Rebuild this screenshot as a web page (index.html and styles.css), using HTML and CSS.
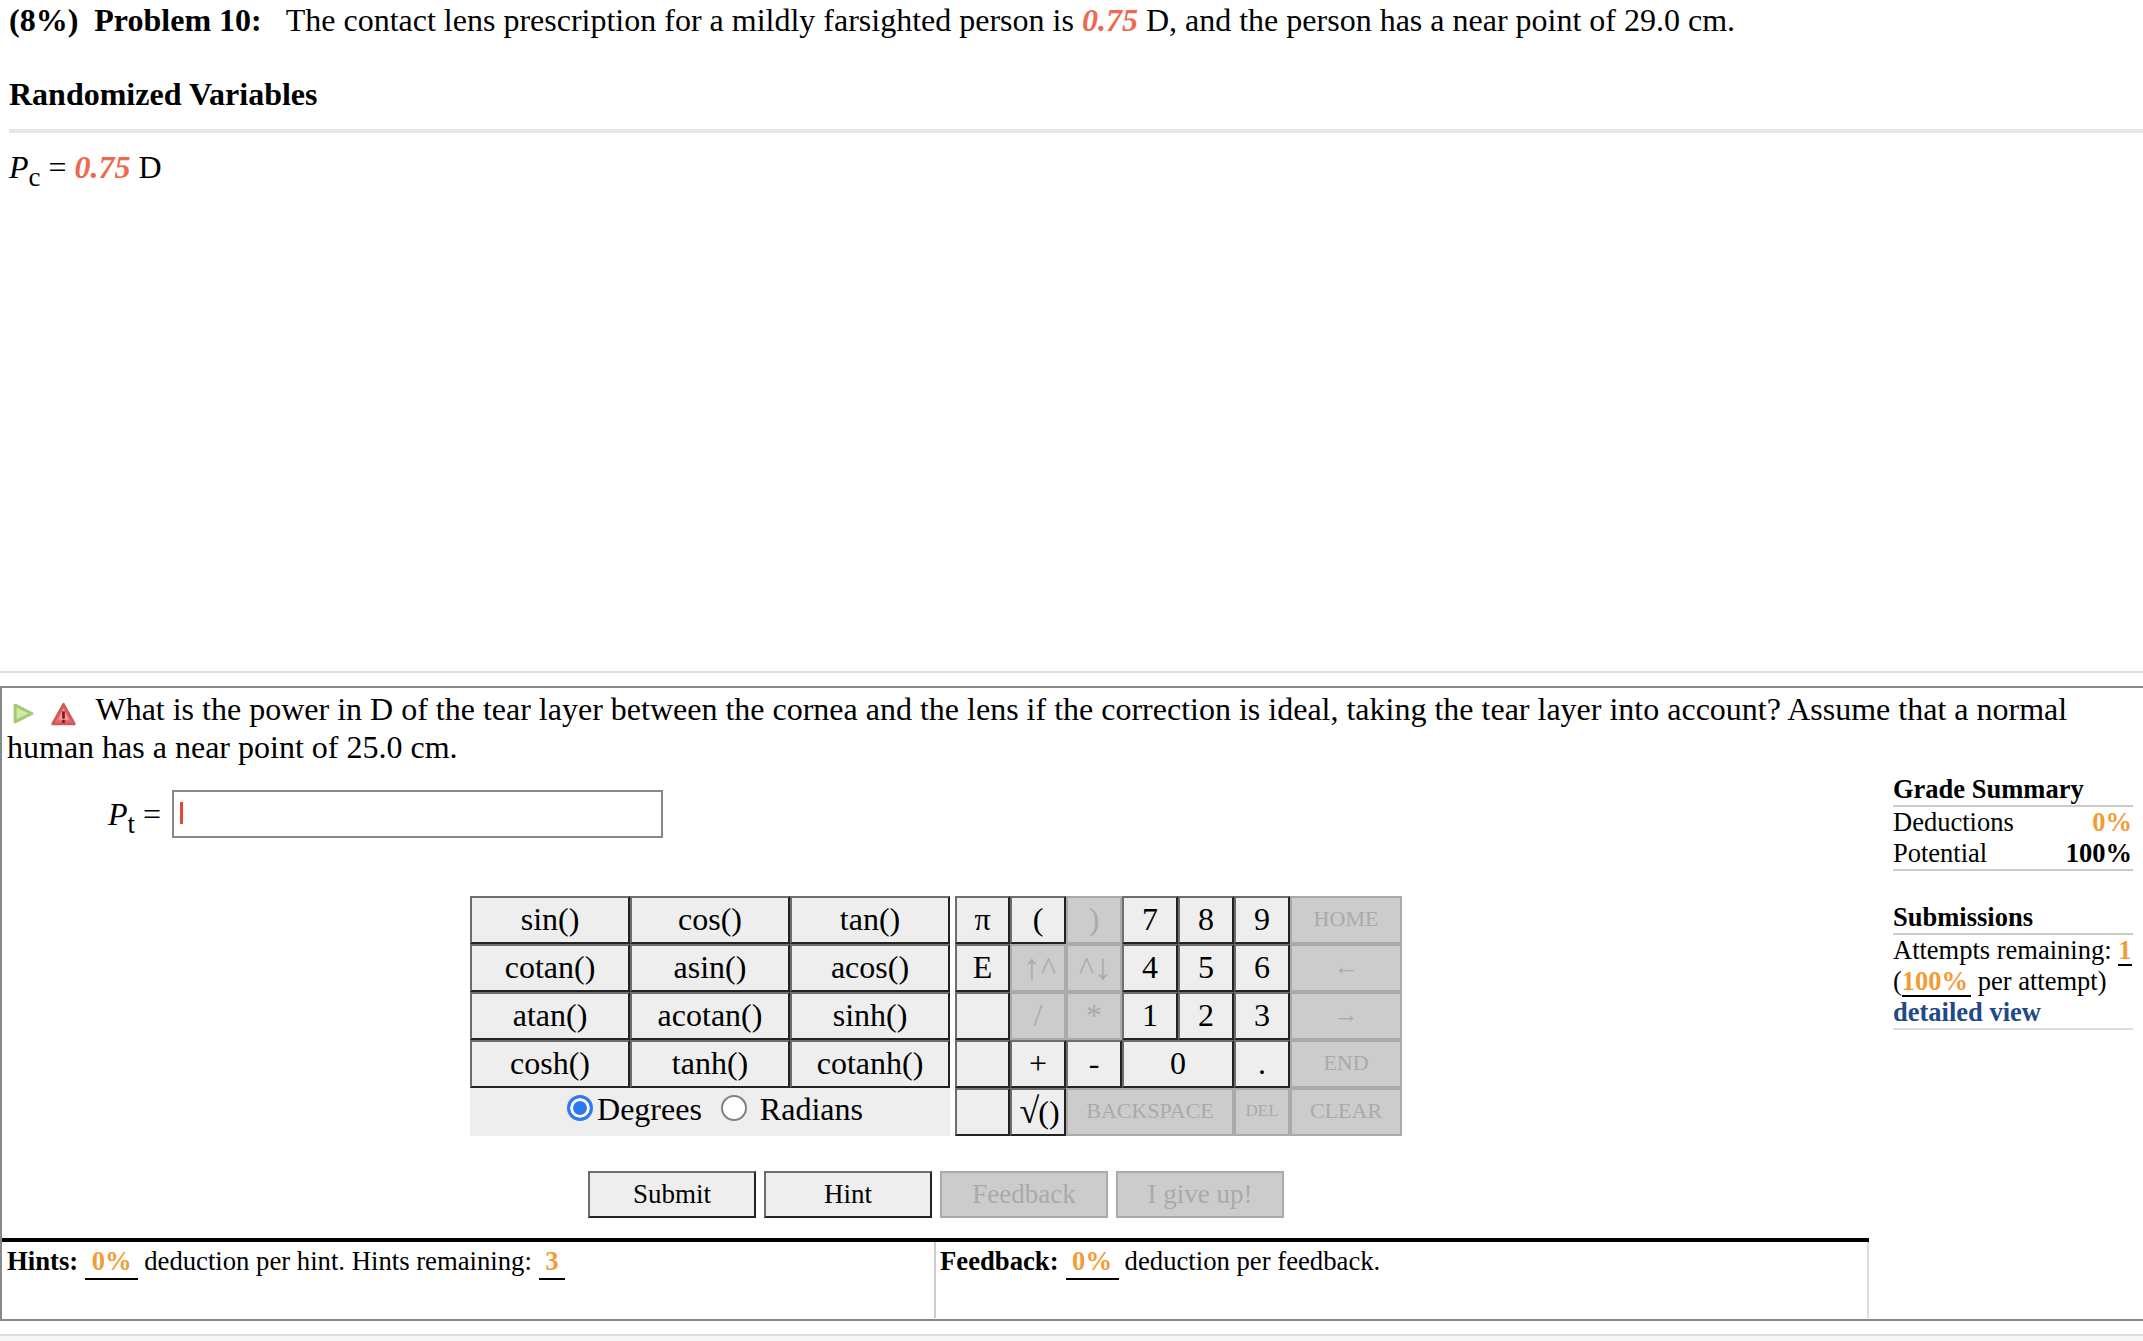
FILE: index.html
```html
<!DOCTYPE html>
<html lang="en">
<head>
<meta charset="utf-8">
<title>Problem 10</title>
<link rel="stylesheet" href="styles.css">
</head>
<body>
<header class="statement">
  <p class="intro"><b>(8%)</b><b class="prob">Problem 10:</b><span class="desc">The contact lens prescription for a mildly farsighted person is <i class="rand">0.75</i> D, and the person has a near point of 29.0 cm.</span></p>
  <h2 class="rv-title">Randomized Variables</h2>
  <div class="rv-rule"></div>
  <p class="rv"><i>P</i><sub>c</sub> = <i class="rand">0.75</i> D</p>
</header>
<div class="sep"></div>
<section class="question">
  <p class="q-text">
    <svg class="ico-play" viewBox="0 0 20 20" width="21" height="21"><path d="M2 2 L18 10 L2 18 Z" fill="#d3e8a4" stroke="#a5c873" stroke-width="2.8" stroke-linejoin="round"/></svg>
    <svg class="ico-warn" viewBox="0 0 24 24" width="25" height="25"><path d="M12 2 L22.5 21 H1.5 Z" fill="#e46c6c" stroke="#d05a5a" stroke-width="2.4" stroke-linejoin="round"/><path d="M12 6.5 L17 17 H7 Z" fill="#f0a4a4"/><path d="M12 9 V16" stroke="#8a1414" stroke-width="2.6"/><circle cx="12" cy="18.6" r="1.5" fill="#8a1414"/></svg>
    <span class="q-first">What is the power in D of the tear layer between the cornea and the lens if the correction is ideal, taking the tear layer into account? Assume that a normal human has a near point of 25.0 cm.</span>
  </p>
  <div class="work">
    <div class="main">
      <div class="answer">
        <span class="ans-label"><i>P</i><sub>t</sub> =</span>
        <div class="ans-input"><span class="caret"></span></div>
      </div>
      <div class="pad">
        <div class="funcs">
          <button class="k">sin()</button><button class="k">cos()</button><button class="k">tan()</button>
          <button class="k">cotan()</button><button class="k">asin()</button><button class="k">acos()</button>
          <button class="k">atan()</button><button class="k">acotan()</button><button class="k">sinh()</button>
          <button class="k">cosh()</button><button class="k">tanh()</button><button class="k">cotanh()</button>
          <div class="angle">
            <span class="radio on"></span><span class="deg">Degrees</span><span class="radio"></span><span class="rad">Radians</span>
          </div>
        </div>
        <div class="keys">
          <button class="k">π</button><button class="k">(</button><button class="k off">)</button><button class="k">7</button><button class="k">8</button><button class="k">9</button><button class="k off sm">HOME</button>
          <button class="k">E</button><button class="k off nudge"><span class="arrow">↑</span>^</button><button class="k off nudge">^<span class="arrow">↓</span></button><button class="k">4</button><button class="k">5</button><button class="k">6</button><button class="k off sm arw">←</button>
          <button class="k"></button><button class="k off">/</button><button class="k off">*</button><button class="k">1</button><button class="k">2</button><button class="k">3</button><button class="k off sm arw">→</button>
          <button class="k"></button><button class="k">+</button><button class="k">-</button><button class="k s2">0</button><button class="k">.</button><button class="k off sm">END</button>
          <button class="k"></button><button class="k nudge"><span class="root">√</span>()</button><button class="k off sm s3">BACKSPACE</button><button class="k off xs">DEL</button><button class="k off sm">CLEAR</button>
        </div>
      </div>
      <div class="actions">
        <button class="act">Submit</button><button class="act">Hint</button><button class="act off">Feedback</button><button class="act off">I give up!</button>
      </div>
      <div class="foot">
        <div class="foot-cell hints"><b>Hints:</b><span class="val w-pct">0%</span>deduction per hint. Hints remaining:<span class="val w-one">3</span></div>
        <div class="foot-cell fb"><b>Feedback:</b><span class="val w-pct">0%</span>deduction per feedback.</div>
      </div>
    </div>
    <aside class="side">
      <h3 class="side-h">Grade Summary</h3>
      <div class="side-row"><span>Deductions</span><b class="org">0%</b></div>
      <div class="side-row last"><span>Potential</span><b>100%</b></div>
      <h3 class="side-h second">Submissions</h3>
      <div class="side-text">Attempts remaining: <b class="org und">1</b><br>(<b class="org und wide">100%</b> per attempt)<br><a class="detail" href="#">detailed view</a></div>
    </aside>
  </div>
</section>
<div class="page-end"></div>
</body>
</html>
```
FILE: styles.css
```css
* { box-sizing: border-box; }
html, body { margin: 0; padding: 0; background: #fff; }
body { font-family: "Liberation Serif", "Times New Roman", serif; font-size: 32px; color: #000; width: 2143px; height: 1341px; overflow: hidden; display: flex; flex-direction: column; }
p, h2, h3 { margin: 0; }
.statement { height: 671px; padding: 2px 9px 0; flex: none; }
.intro { line-height: 36px; white-space: nowrap; }
.prob { margin-left: 16px; }
.desc { margin-left: 24px; }
.rand { color: #ee6a4e; font-weight: bold; }
.rv-title { font-size: 32px; line-height: 36px; font-weight: bold; margin-top: 38px; }
.rv-rule { height: 4px; background: #e6e6e6; margin: 17px -9px 0 0; }
.rv { line-height: 36px; margin-top: 16px; white-space: nowrap; }
sub { font-size: 27px; line-height: 0; vertical-align: -8px; }
.sep { height: 2px; background: #ddd; flex: none; }
.question { flex: none; margin-top: 13px; height: 635px; border: 2px solid #888; border-right: 0; position: relative; }
.q-text { line-height: 37.5px; padding: 3px 40px 0 5px; }
.ico-play { vertical-align: -4px; margin-left: 6px; filter: blur(0.5px); }
.ico-warn { vertical-align: -7px; margin-left: 9px; margin-right: 12px; filter: blur(0.4px); }
.work { display: flex; }
.main { width: 1867px; flex: none; }
.answer { display: flex; align-items: center; height: 48px; margin-top: 24px; }
.ans-label { width: 170px; text-align: right; padding-right: 11px; white-space: nowrap; }
.ans-input { width: 491px; height: 48px; border: 2px solid #888; background: #fff; padding: 10px 0 0 6px; }
.caret { display: block; width: 3px; height: 22px; background: #ea4335; }
.pad { display: flex; gap: 5px; margin: 58px 0 0 468px; }
.funcs { display: grid; grid-template-columns: repeat(3, 160px); grid-auto-rows: 48px; }
.keys { display: grid; grid-template-columns: 55px 56px 56px 56px 56px 56px 112px; grid-auto-rows: 48px; }
.k { font: inherit; font-size: 32px; line-height: 36px; padding: 0 0 2px; background: #eee; color: #000; border: 2px solid; border-color: #6e6e6e #222 #222 #6e6e6e; white-space: nowrap; }
.k.off { background: #ccc; color: #aaa; border-color: #aaa; }
.k.sm { font-size: 22px; }
.k.arw { font-size: 25px; }
.k.xs { font-size: 17px; }
.k.nudge { padding-left: 3px; }
.arrow { font-size: 36px; line-height: 36px; }
.root { font-size: 36px; line-height: 36px; letter-spacing: -1px; }
.s2 { grid-column: span 2; }
.s3 { grid-column: span 3; }
.angle { grid-column: span 3; background: #eee; display: flex; align-items: center; justify-content: center; padding: 0 0 5px 10px; }
.radio { width: 26px; height: 26px; border-radius: 50%; border: 2px solid #808080; background: #fff; flex: none; margin-bottom: 4px; }
.radio.on { border: 3px solid #2f78f0; background: #2f78f0; box-shadow: inset 0 0 0 3px #fff; }
.deg { margin: 0 19px 0 4px; }
.rad { margin-left: 13px; }
.actions { display: flex; gap: 8px; margin: 35px 0 0 586px; }
.act { font: inherit; font-size: 27px; width: 168px; height: 47px; padding: 0; background: #eee; color: #000; border: 2px solid; border-color: #6e6e6e #222 #222 #6e6e6e; }
.act.off { background: #ccc; color: #aaa; border-color: #aaa; }
.foot { display: flex; height: 80px; margin-top: 20px; border-top: 4px solid #000; font-size: 26.7px; line-height: 31px; }
.foot-cell { padding: 4px 0 0 5px; white-space: nowrap; }
.hints { width: 934px; border-right: 2px solid #ccc; }
.fb { flex: 1; border-right: 2px solid #ddd; padding-left: 4px; }
.val { display: inline-block; color: #f39c37; font-weight: bold; text-align: center; border-bottom: 2px solid #000; margin: 0 6px 0 7px; padding-bottom: 1px; }
.w-pct { width: 53px; }
.w-one { width: 26px; }
.side { width: 240px; margin: 8px 0 0 24px; font-size: 26.5px; line-height: 31px; }
.side-h { font-size: 26.5px; font-weight: bold; line-height: 31px; border-bottom: 2px solid #ccc; }
.side-h.second { margin-top: 31px; }
.side-row { display: flex; justify-content: space-between; padding-right: 1px; }
.side-row.last { border-bottom: 2px solid #ccc; }
.side-text { border-bottom: 2px solid #ddd; white-space: nowrap; line-height: 31px; }
.org { color: #f39c37; }
.und { display: inline-block; line-height: 28px; border-bottom: 2px solid #000; padding-right: 1px; }
.und.wide { padding-right: 3px; }
.detail { color: #1f4a87; font-weight: bold; text-decoration: none; }
.page-end { flex: 1; margin-top: 13px; border-top: 2px solid #ddd; background: #f6f6f6; }
```
